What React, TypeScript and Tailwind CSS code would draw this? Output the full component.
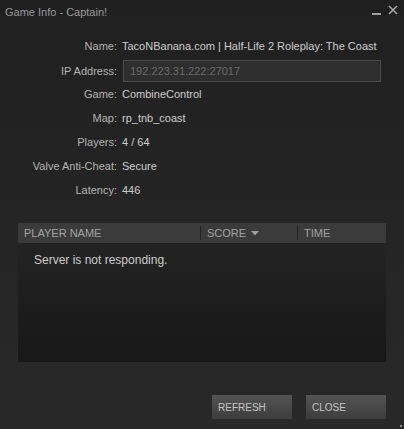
import React from 'react';

const rows: { label: string; value: string; h: string }[] = [
  { label: 'Name:', value: 'TacoNBanana.com | Half-Life 2 Roleplay: The Coast', h: 'h-[25px]' },
  { label: 'IP Address:', value: '192.223.31.222:27017', h: 'h-[24px]' },
  { label: 'Game:', value: 'CombineControl', h: 'h-[23px]' },
  { label: 'Map:', value: 'rp_tnb_coast', h: 'h-[24px]' },
  { label: 'Players:', value: '4 / 64', h: 'h-[24px]' },
  { label: 'Valve Anti-Cheat:', value: 'Secure', h: 'h-[24px]' },
  { label: 'Latency:', value: '446', h: 'h-[24px]' },
];

export default function App() {
  return (
    <div className="relative flex h-[429px] w-[404px] flex-col bg-gradient-to-b from-[#202020] to-[#292929] font-['Liberation_Sans',Arial,sans-serif] text-[11px]">
      {/* Title bar */}
      <div className="flex h-[34px] items-start justify-between pl-[5px] pr-[6px] pt-[4px]">
        <span className="text-[11px] text-[#9a9a9a]">Game Info - Captain!</span>
        <div className="flex items-start gap-[7px] pt-[1px]">
          <svg width="9" height="10" viewBox="0 0 9 10">
            <rect x="0" y="8" width="9" height="2" fill="#a0a0a0" />
          </svg>
          <svg width="10" height="10" viewBox="0 0 10 10">
            <path d="M1 1 L9 9 M9 1 L1 9" stroke="#a8a8a8" strokeWidth="1.5" />
          </svg>
        </div>
      </div>

      {/* Info rows */}
      <div className="flex flex-col">
        {rows.map((r) => (
          <div key={r.label} className={`flex items-center ${r.h}`}>
            <div className="w-[117px] shrink-0 text-right text-[#b4b4b4]">{r.label}</div>
            {r.label === 'IP Address:' ? (
              <div className="ml-[6px] flex h-[22px] w-[258px] items-center border border-[#4a4a4a] bg-[#2e2e2e] px-[6px] text-[#6b6b6b]">
                {r.value}
              </div>
            ) : (
              <div className="ml-[5px] text-[#cdcdcd]">{r.value}</div>
            )}
          </div>
        ))}
      </div>

      {/* Player table */}
      <div className="mx-[18px] mt-[21px] flex flex-col">
        <div className="flex h-[20px] items-center bg-[#3b3b3b] text-[11px] text-[#a3a3a3]">
          <div className="w-[182px] pl-[6px]">PLAYER NAME</div>
          <div className="flex h-[14px] w-[97px] items-center gap-[5px] border-l border-[#222] pl-[6px]">
            SCORE
            <svg width="8" height="5" viewBox="0 0 8 5">
              <path d="M0 0 L8 0 L4 4.5 Z" fill="#a0a0a0" />
            </svg>
          </div>
          <div className="flex h-[14px] items-center border-l border-[#222] pl-[6px]">TIME</div>
        </div>
        <div className="h-[119px] bg-gradient-to-b from-[#232323] to-[#181818] pl-[16px] pt-[8px] text-[12px] text-[#cdcdcd]">
          Server is not responding.
        </div>
      </div>

      {/* Buttons */}
      <div className="mr-[18px] mt-[33px] flex justify-end gap-[14px]">
        {['REFRESH', 'CLOSE'].map((b) => (
          <button
            key={b}
            className="flex h-[24px] w-[80px] items-center bg-gradient-to-b from-[#545454] to-[#3d3d3d] pl-[6px] text-[10px] text-[#c6c6c6]"
          >
            {b}
          </button>
        ))}
      </div>

      {/* Resize grip */}
      <div className="absolute bottom-[2px] right-[2px] h-[2px] w-[2px] bg-[#8a8a8a]" />
    </div>
  );
}
